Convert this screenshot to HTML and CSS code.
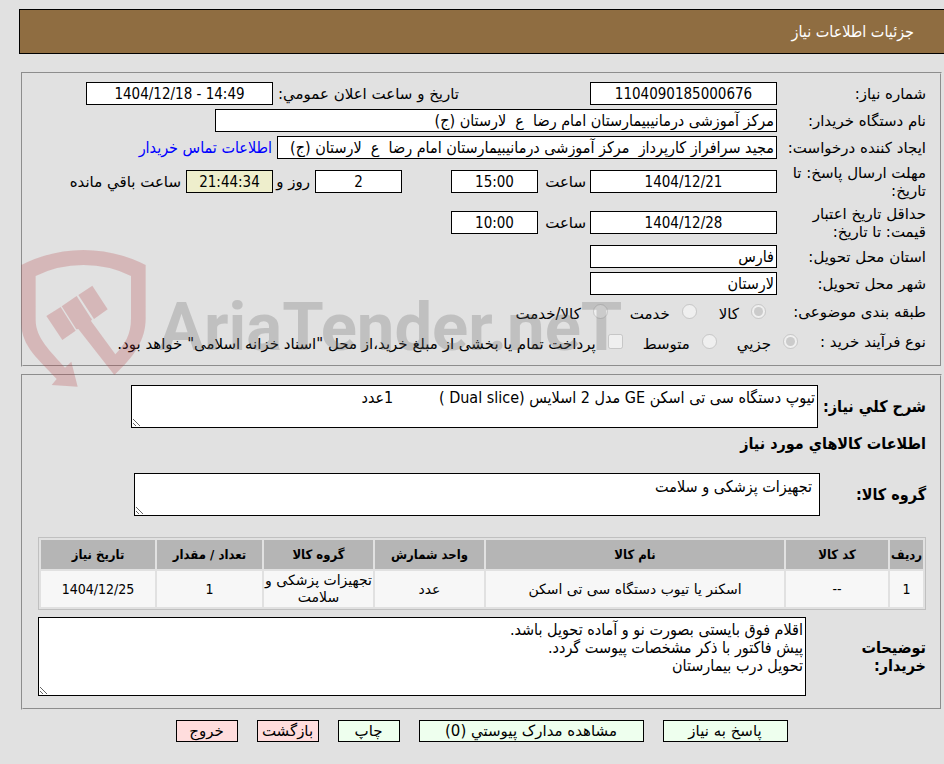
FILE: index.html
```html
<!DOCTYPE html>
<html lang="fa" dir="rtl">
<head>
    <meta charset="utf-8">
    <title>جزئیات اطلاعات نیاز</title>
    <link rel="stylesheet" href="styles.css">
</head>
<body>
    <h1 class="page-title">جزئیات اطلاعات نیاز</h1>

    <form class="need-form">
        <fieldset class="box need-info">
            <div class="row">
                <label class="caption" for="need-no">شماره نیاز:</label>
                <input class="field field-md center" id="need-no" type="text" dir="ltr" value="1104090185000676" readonly>
                <label class="caption-announce" for="announce">تاریخ و ساعت اعلان عمومي:</label>
                <input class="field field-md center" id="announce" type="text" dir="ltr" value="1404/12/18 - 14:49" readonly>
            </div>
            <div class="row">
                <label class="caption" for="buyer">نام دستگاه خریدار:</label>
                <input class="field field-xl" id="buyer" type="text" value="مرکز آموزشی درمانیبیمارستان امام رضا  ع  لارستان (ج)" readonly>
            </div>
            <div class="row">
                <label class="caption" for="creator">ایجاد کننده درخواست:</label>
                <input class="field field-lg" id="creator" type="text" value="مجید سرافراز کارپرداز  مرکز آموزشی درمانیبیمارستان امام رضا  ع  لارستان (ج)" readonly>
                <a class="contact-link" href="#">اطلاعات تماس خریدار</a>
            </div>
            <div class="row row-tall">
                <label class="caption" for="reply-date">مهلت ارسال پاسخ: تا تاریخ:</label>
                <input class="field field-md center" id="reply-date" type="text" dir="ltr" value="1404/12/21" readonly>
                <label class="caption-hour" for="reply-hour">ساعت</label>
                <input class="field field-sm center" id="reply-hour" type="text" dir="ltr" value="15:00" readonly>
                <input class="field field-sm center days" id="days" type="text" dir="ltr" value="2" readonly>
                <label class="caption-days" for="days">روز و</label>
                <input class="field field-sm center countdown" id="left" type="text" dir="ltr" value="21:44:34" readonly>
                <label class="caption-left" for="left">ساعت باقي مانده</label>
            </div>
            <div class="row row-tall">
                <label class="caption" for="price-date">حداقل تاریخ اعتبار قیمت: تا تاریخ:</label>
                <input class="field field-md center" id="price-date" type="text" dir="ltr" value="1404/12/28" readonly>
                <label class="caption-hour" for="price-hour">ساعت</label>
                <input class="field field-sm center" id="price-hour" type="text" dir="ltr" value="10:00" readonly>
            </div>
            <div class="row">
                <label class="caption" for="province">استان محل تحویل:</label>
                <input class="field field-md" id="province" type="text" value="فارس" readonly>
            </div>
            <div class="row">
                <label class="caption" for="city">شهر محل تحویل:</label>
                <input class="field field-md" id="city" type="text" value="لارستان" readonly>
            </div>
            <div class="row row-options">
                <span class="caption">طبقه بندی موضوعی:</span>
                <div class="options options-subject">
                    <label class="option"><input type="radio" name="subject" checked disabled><span>کالا</span></label>
                    <label class="option"><input type="radio" name="subject" disabled><span>خدمت</span></label>
                    <label class="option"><input type="radio" name="subject" disabled><span>کالا/خدمت</span></label>
                </div>
            </div>
            <div class="row row-options">
                <span class="caption caption-short">نوع فرآیند خرید :</span>
                <div class="options options-process">
                    <label class="option"><input type="radio" name="process" checked disabled><span>جزیي</span></label>
                    <label class="option"><input type="radio" name="process" disabled><span>متوسط</span></label>
                    <label class="option"><input type="checkbox" disabled><span>پرداخت تمام یا بخشی از مبلغ خرید،از محل "اسناد خزانه اسلامی" خواهد بود.</span></label>
                </div>
            </div>
        </fieldset>

        <fieldset class="box goods-info">
            <div class="area-row area-summary">
                <label for="summary">شرح کلي نیاز:</label>
                <textarea class="area" id="summary" readonly>تیوپ دستگاه سی تی اسکن GE مدل 2 اسلایس (Dual slice )          1عدد</textarea>
            </div>
            <h2 class="section-title">اطلاعات کالاهاي مورد نیاز</h2>
            <div class="area-row area-group">
                <label for="group">گروه کالا:</label>
                <textarea class="area" id="group" readonly>تجهیزات پزشکی و سلامت</textarea>
            </div>
            <table class="goods">
                <colgroup>
                    <col class="col-row">
                    <col class="col-code">
                    <col>
                    <col class="col-unit">
                    <col class="col-unit">
                    <col class="col-count">
                    <col class="col-date">
                </colgroup>
                <thead>
                    <tr>
                        <th>ردیف</th>
                        <th>کد کالا</th>
                        <th>نام کالا</th>
                        <th>واحد شمارش</th>
                        <th>گروه کالا</th>
                        <th>تعداد / مقدار</th>
                        <th>تاریخ نیاز</th>
                    </tr>
                </thead>
                <tbody>
                    <tr>
                        <td class="num">1</td>
                        <td class="num">--</td>
                        <td>اسکنر یا تیوب دستگاه سی تی اسکن</td>
                        <td>عدد</td>
                        <td>تجهیزات پزشکی و سلامت</td>
                        <td class="num">1</td>
                        <td class="num">1404/12/25</td>
                    </tr>
                </tbody>
            </table>
            <div class="area-row area-notes">
                <label for="notes">توضیحات خریدار:</label>
                <textarea class="area" id="notes" readonly>اقلام فوق بایستی بصورت نو و آماده تحویل باشد.
پیش فاکتور با ذکر مشخصات پیوست گردد.
تحویل درب بیمارستان</textarea>
            </div>
        </fieldset>

        <div class="buttons">
            <button class="btn btn-reply" type="button">پاسخ به نیاز</button>
            <button class="btn btn-docs" type="button">مشاهده مدارک پیوستي (0)</button>
            <button class="btn" type="button">چاپ</button>
            <button class="btn btn-red" type="button">بازگشت</button>
            <button class="btn btn-red" type="button">خروج</button>
        </div>

        <!-- watermark over the form -->
        <div class="watermark" dir="ltr">
            <svg class="watermark-logo" viewBox="60 27 378 417" aria-hidden="true">
                <path d="M61 75Q150 30 247 30Q345 30 434 75V235C434 300 400 350 340 405L232 267L226 268L182 199L227 168L269 233L273 238L270 243L343 343C372 312 390 285 390 235V108Q325 75 247 75Q170 75 104 108V240C104 295 150 335 192 383L211 365L230 440L152 435L167 417C115 360 61 320 61 250Z"/>
                <path d="M136 228L179 201L224 272L184 300ZM232 165L274 137L320 208L279 237Z"/>
            </svg>
            <span class="watermark-text">AriaTender.neT</span>
        </div>
    </form>
</body>
</html>
```

FILE: styles.css
```css
* {
    box-sizing: border-box;
}

body {
    margin: 0;
    padding: 9px 0 0 19px;
    background-color: #e1e1e1;
    color: #000;
    font-family: "DejaVu Sans", Tahoma, sans-serif;
    font-size: 15px;
    line-height: 18px;
}

.page-title {
    margin: 0 0 18px;
    padding: 13px 30px 12px;
    background-color: #8f6d41;
    border: 1px solid #000;
    border-right: none;
    color: #fff;
    font-family: "DejaVu Sans Condensed", Tahoma, sans-serif;
    font-size: 16px;
    font-weight: normal;
}

.need-form {
    position: relative;
    margin: 0 2px;
}

.box {
    margin: 0 0 7px;
    border: 2px groove #e1e1e1;
    min-width: 0;
}

.need-info {
    padding: 6px 14px 8px;
}

.goods-info {
    padding: 9px 14px 12px 15px;
}

/* first box */
.row {
    display: flex;
    align-items: center;
    min-height: 27px;
}

.row-tall {
    min-height: 41px;
}

.row-options {
    min-height: 30px;
}

.caption {
    flex: none;
    width: 149px;
    padding-left: 6px;
}

.caption-short {
    width: 128px;
    padding-left: 0;
}

.field {
    height: 23px;
    padding: 0 2px;
    border: 1px solid #000;
    background-color: #fff;
    color: #000;
    font-family: "DejaVu Sans Condensed", Tahoma, sans-serif;
    font-size: 16px;
}

.center {
    text-align: center;
    font-size: 15px;
}

.field-sm { width: 87px; }
.field-md { width: 187px; }
.field-lg { width: 500px; }
.field-xl { width: 562px; }

.caption-announce {
    width: 317px;
    padding-right: 131px;
    white-space: nowrap;
}

.caption-hour {
    width: 52px;
    padding-right: 4px;
}

.days {
    margin-right: 49px;
}

.caption-days {
    width: 42px;
    padding-right: 5px;
    white-space: nowrap;
}

.countdown {
    background-color: #eeeecc;
}

.caption-left {
    padding-right: 5px;
}

.contact-link {
    padding-right: 5px;
    color: #00f;
    font-family: "DejaVu Sans Condensed", Tahoma, sans-serif;
    font-size: 16px;
    text-decoration: none;
    white-space: nowrap;
}

.options,
.option {
    display: flex;
    align-items: center;
}

.options {
    padding-top: 4px;
    gap: 22px;
}

.options-subject {
    padding-right: 11px;
}

.options-process {
    gap: 20px;
}

.option {
    gap: 12px;
    white-space: nowrap;
}

.option input {
    width: 15px;
    height: 15px;
    margin: 0 0 6px;
}

/* second box */
.area-row {
    display: flex;
    align-items: center;
}

.area-row label {
    flex: none;
    font-family: "DejaVu Sans Condensed", Tahoma, sans-serif;
    font-size: 16px;
    font-weight: bold;
}

.area {
    flex: 1;
    height: 43px;
    padding: 3px 2px;
    border: 1px solid #000;
    background-color: #fff;
    color: #000;
    font-family: "DejaVu Sans Condensed", Tahoma, sans-serif;
    font-size: 16px;
    line-height: 18px;
}

.area-summary {
    padding-left: 93px;
}

.area-summary label {
    width: 108px;
}

.section-title {
    margin: 7px 0 20px;
    font-family: "DejaVu Sans Condensed", Tahoma, sans-serif;
    font-size: 16px;
    font-weight: bold;
}

.area-group {
    padding-left: 96px;
}

.area-group label {
    width: 106px;
}

.area-group .area {
    padding: 4px 7px;
}

.goods {
    table-layout: fixed;
    width: 100%;
    margin: 21px 0 7px;
    border: 1px solid #c0c0c0;
    border-spacing: 2px;
    text-align: center;
}

.col-row { width: 33px; }
.col-code { width: 102px; }
.col-unit { width: 109px; }
.col-count { width: 105px; }
.col-date { width: 114px; }

.goods th {
    height: 29px;
    padding: 0;
    background-color: #b5b5b5;
    font-family: "DejaVu Sans Condensed", Tahoma, sans-serif;
    font-size: 13px;
}

.goods td {
    height: 36px;
    padding: 0;
    background-color: #f7f7f7;
    font-size: 14px;
    line-height: 17px;
}

.goods .num {
    font-family: "DejaVu Sans Condensed", Tahoma, sans-serif;
}

.area-notes label {
    width: 120px;
    padding-left: 40px;
}

.area-notes .area {
    height: 79px;
}

/* bottom buttons */
.buttons {
    display: flex;
    justify-content: center;
    gap: 19px;
    padding-top: 3px;
}

.btn {
    width: 62px;
    height: 22px;
    padding: 0;
    border: 1px solid #000;
    background-color: #eeffee;
    color: #000;
    font-family: inherit;
    font-size: 15px;
    line-height: 18px;
    white-space: nowrap;
    cursor: pointer;
}

.btn-reply { width: 125px; }
.btn-docs { width: 225px; }

.btn-red {
    background-color: #ffdddd;
}

.watermark {
    position: absolute;
    top: 177px;
    left: 0;
    display: flex;
    align-items: flex-start;
    gap: 12px;
    pointer-events: none;
}

.watermark-logo {
    width: 126px;
    height: 139px;
    fill: rgba(180, 60, 64, 0.25);
}

.watermark-text {
    padding-top: 38px;
    color: rgba(100, 100, 100, 0.26);
    font-family: Roboto, Lato, sans-serif;
    font-size: 67px;
    font-weight: bold;
    line-height: 80px;
}
```
